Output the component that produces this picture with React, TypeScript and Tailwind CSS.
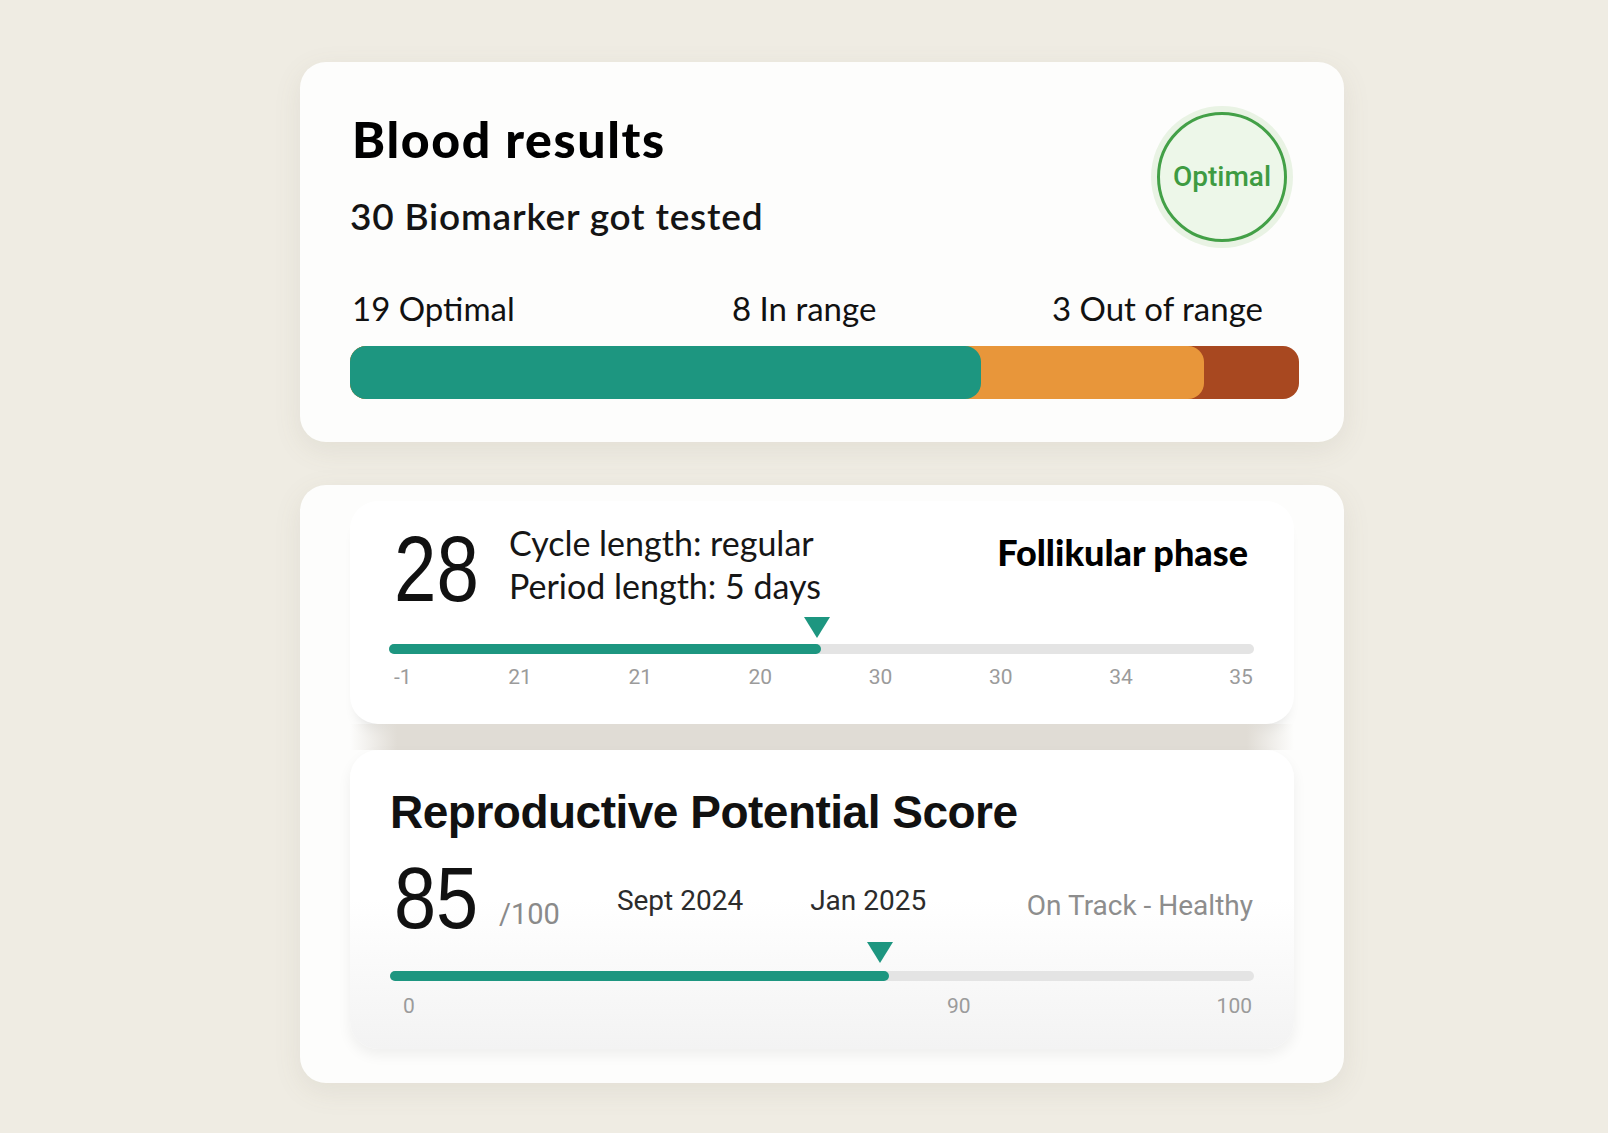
import React from "react";

const lato = "font-['Lato','Noto_Sans',sans-serif]";
const helv = "font-['Liberation_Sans','Roboto',sans-serif]";
const roboto = "font-['Roboto','Liberation_Sans',sans-serif]";

const cycleTicks = ["-1", "21", "21", "20", "30", "30", "34", "35"];

function Marker({ left }: { left: string }) {
  return (
    <svg
      className="absolute top-0 h-[21px] w-[26px]"
      style={{ left: `calc(${left} - 13px)` }}
      viewBox="0 0 26 21"
    >
      <polygon points="0,0 26,0 13,21" fill="#1d9680" />
    </svg>
  );
}

function Track({ fill }: { fill: string }) {
  return (
    <div className="h-[10px] w-full rounded-full bg-[#e4e4e4]">
      <div className="h-full rounded-full bg-[#1d9680]" style={{ width: fill }} />
    </div>
  );
}

export default function App() {
  return (
    <div className="min-h-screen w-full bg-[#efece3] pl-[300px] pt-[62px] pb-[51px]">
      <div className="flex w-[1044px] flex-col gap-[43px]">
        {/* Blood results */}
        <section className="relative rounded-[26px] bg-[#fdfdfc] pl-[50px] pr-[45px] pt-[51px] pb-[43px] shadow-[0_8px_28px_rgba(120,110,90,0.10)]">
          <div className={lato}>
            <h1 className="ml-[2px] text-[50px] font-black leading-[52px] tracking-[1.6px] text-black">Blood results</h1>
            <p className="mt-[31px] text-[37px] font-semibold leading-[40px] tracking-[0.8px] text-[#141414]">
              30 Biomarker got tested
            </p>
          </div>
          <div className="absolute right-[51px] top-[44px] flex h-[142px] w-[142px] items-center justify-center rounded-full bg-[#e9f3e4]">
            <div className="flex h-[130px] w-[130px] items-center justify-center rounded-full border-[3px] border-[#43a047] bg-[#edf7e9]">
              <span className="font-['Roboto',sans-serif] text-[28px] font-medium text-[#3e9b42]">Optimal</span>
            </div>
          </div>
          <div className={`${lato} mt-[53px] grid grid-cols-[380px_1fr_auto] pl-[2px] pr-[36px] text-[33px] leading-[38px] text-[#111]`}>
            <span>19 Optimal</span>
            <span>8 In range</span>
            <span>3 Out of range</span>
          </div>
          <div className="mt-[19px] h-[53px] w-full overflow-hidden rounded-[16px] bg-[#a84820]">
            <div className="h-full w-[90%] rounded-r-[16px] bg-[#e8963a]">
              <div className="h-full w-[73.9%] rounded-r-[16px] bg-[#1d9680]" />
            </div>
          </div>
        </section>

        {/* Cycle + score */}
        <section className="rounded-[26px] bg-[#fdfdfc] px-[50px] pt-[16px] pb-[34px] shadow-[0_8px_28px_rgba(120,110,90,0.10)]">
          <div className="rounded-[28px] bg-white pl-[39px] pr-[40px] pt-[21px] pb-[35px] shadow-[0_12px_14px_-8px_rgba(0,0,0,0.12)]">
            <div className="flex items-start">
              <div className="ml-[5px] mt-[1px] w-[86px] shrink-0">
                <span className={`${helv} inline-block origin-left scale-x-[0.82] text-[93px] leading-none text-[#111]`}>28</span>
              </div>
              <div className={`${lato} ml-[29px] mt-[-1px] text-[34px] leading-[43px] text-[#161616]`}>
                <div>Cycle length: regular</div>
                <div>Period length: 5 days</div>
              </div>
              <span className={`${lato} ml-auto mr-[6px] mt-[8px] text-[36px] font-black leading-[44px] text-black`}>
                Follikular phase
              </span>
            </div>
            <div className="relative mt-[1px] pt-[27px]">
              <Marker left="49.5%" />
              <Track fill="49.9%" />
            </div>
            <div className={`${roboto} mt-[11px] flex justify-between pl-[5px] pr-[1px] text-[21px] leading-[24px] text-[#9b9b9b]`}>
              {cycleTicks.map((t, i) => (
                <span key={i}>{t}</span>
              ))}
            </div>
          </div>

          <div className="h-[26px] bg-[linear-gradient(to_right,transparent,#e0dcd5_5%,#e0dcd5_95%,transparent)]" />

          <div className="rounded-[28px] bg-gradient-to-b from-white via-white to-[#f3f3f3] pl-[40px] pr-[40px] pt-[35px] pb-[31px] shadow-[0_6px_14px_rgba(0,0,0,0.06)]">
            <h2 className={`${helv} text-[46px] font-bold leading-[54px] tracking-[-0.5px] text-[#111]`}>
              Reproductive Potential Score
            </h2>
            <div className="mt-[15px] flex items-start">
              <div className="ml-[4px] w-[86px] shrink-0">
                <span className={`${helv} inline-block origin-left scale-x-[0.86] text-[88px] leading-none text-[#111]`}>85</span>
              </div>
              <span className={`${roboto} ml-[19px] mt-[46px] text-[29px] leading-none text-[#8a8a8a]`}>/100</span>
              <span className={`${roboto} ml-[57px] mt-[33px] text-[28px] leading-none text-[#2c2c2c]`}>Sept 2024</span>
              <span className={`${roboto} ml-[67px] mt-[33px] text-[28px] leading-none text-[#2c2c2c]`}>Jan 2025</span>
              <span className={`${roboto} ml-auto mr-[1px] mt-[38px] text-[28px] leading-none text-[#8d8d8d]`}>
                On Track - Healthy
              </span>
            </div>
            <div className="relative mt-0 pt-[29px]">
              <Marker left="56.7%" />
              <Track fill="57.7%" />
            </div>
            <div className={`${roboto} relative mt-[13px] h-[24px] text-[21px] leading-[24px] text-[#9b9b9b]`}>
              <span className="absolute left-[13px]">0</span>
              <span className="absolute left-[557px]">90</span>
              <span className="absolute right-[2px]">100</span>
            </div>
          </div>
        </section>
      </div>
    </div>
  );
}
